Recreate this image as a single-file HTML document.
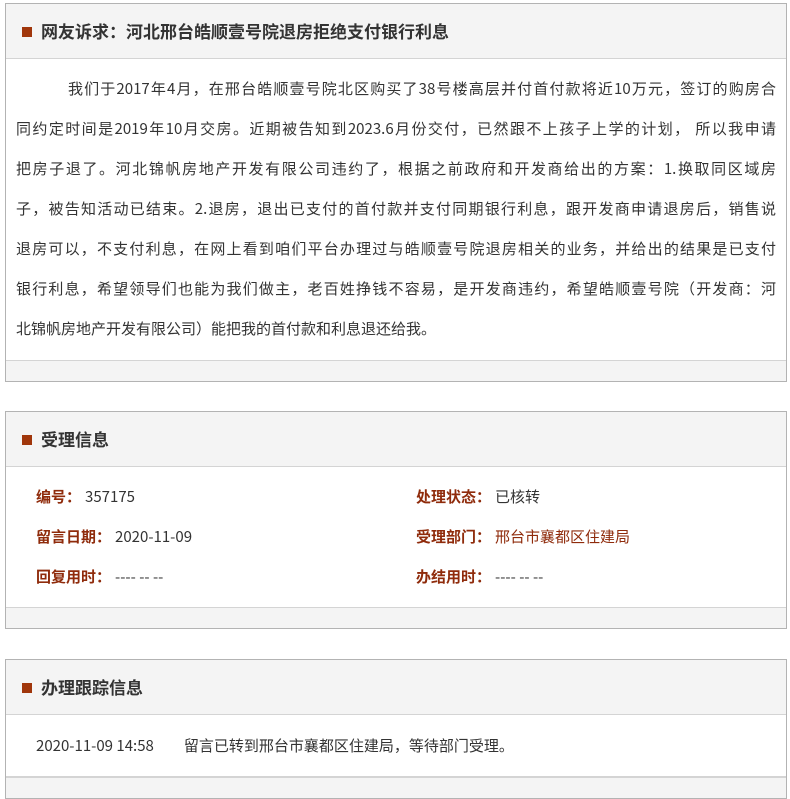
<!DOCTYPE html>
<html><head><meta charset="utf-8"><style>
*{margin:0;padding:0;box-sizing:border-box}
body{width:790px;height:780px;background:#fff;font-family:"Noto Sans CJK SC","Liberation Sans",sans-serif;color:#333;font-size:15px;overflow:hidden;position:relative}
.p{position:absolute;left:5px;width:782px;border:1px solid #b3b3b3;background:#fff}
.h{height:55px;background:#f4f4f4;border-bottom:1px solid #d4d4d4;position:relative}
.h i{position:absolute;left:16px;top:23px;width:10px;height:10px;background:#a0360b}
.h b{position:absolute;left:35px;top:0;line-height:54px;font-size:17px;color:#333}
.f{height:21px;background:#f4f4f4;border-top:1px solid #d4d4d4}
.t{padding:10px 10px 0 10px;height:301px}
.t div{height:40px;line-height:40px;text-align:justify;text-align-last:justify;white-space:nowrap}
.t div.n{text-align-last:left}
.r{position:absolute;font-size:15px;line-height:20px;white-space:nowrap}
.l{color:#8f2b0b;font-weight:bold;padding-right:4px}
</style></head><body>
<div class="p" style="top:3px">
<div class="h"><i></i><b>网友诉求：河北邢台皓顺壹号院退房拒绝支付银行利息</b></div>
<div class="t">
<div style="padding-left:52px">我们于2017年4月，在邢台皓顺壹号院北区购买了38号楼高层并付首付款将近10万元，签订的购房合</div>
<div>同约定时间是2019年10月交房。近期被告知到2023.6月份交付，已然跟不上孩子上学的计划， 所以我申请</div>
<div>把房子退了。河北锦帆房地产开发有限公司违约了，根据之前政府和开发商给出的方案：1.换取同区域房</div>
<div>子，被告知活动已结束。2.退房，退出已支付的首付款并支付同期银行利息，跟开发商申请退房后，销售说</div>
<div>退房可以，不支付利息，在网上看到咱们平台办理过与皓顺壹号院退房相关的业务，并给出的结果是已支付</div>
<div>银行利息，希望领导们也能为我们做主，老百姓挣钱不容易，是开发商违约，希望皓顺壹号院（开发商：河</div>
<div class="n">北锦帆房地产开发有限公司）能把我的首付款和利息退还给我。</div>
</div>
<div class="f"></div>
</div>
<div class="p" style="top:411px">
<div class="h"><i></i><b>受理信息</b></div>
<div style="height:140px;position:relative">
<div class="r" style="left:30px;top:20px"><span class="l">编号：</span>357175</div>
<div class="r" style="left:30px;top:60px"><span class="l">留言日期：</span>2020-11-09</div>
<div class="r" style="left:30px;top:100px"><span class="l">回复用时：</span>---- -- --</div>
<div class="r" style="left:410px;top:20px"><span class="l">处理状态：</span>已核转</div>
<div class="r" style="left:410px;top:60px"><span class="l">受理部门：</span><span style="color:#8f2b0b">邢台市襄都区住建局</span></div>
<div class="r" style="left:410px;top:100px"><span class="l">办结用时：</span>---- -- --</div>
</div>
<div class="f"></div>
</div>
<div class="p" style="top:659px">
<div class="h"><i></i><b>办理跟踪信息</b></div>
<div style="height:62px;position:relative;border-bottom:1px solid #d4d4d4">
<div class="r" style="left:30px;top:21px">2020-11-09 14:58<span style="display:inline-block;width:30px"></span>留言已转到邢台市襄都区住建局，等待部门受理。</div>
</div>
<div class="f"></div>
</div>
</body></html>
